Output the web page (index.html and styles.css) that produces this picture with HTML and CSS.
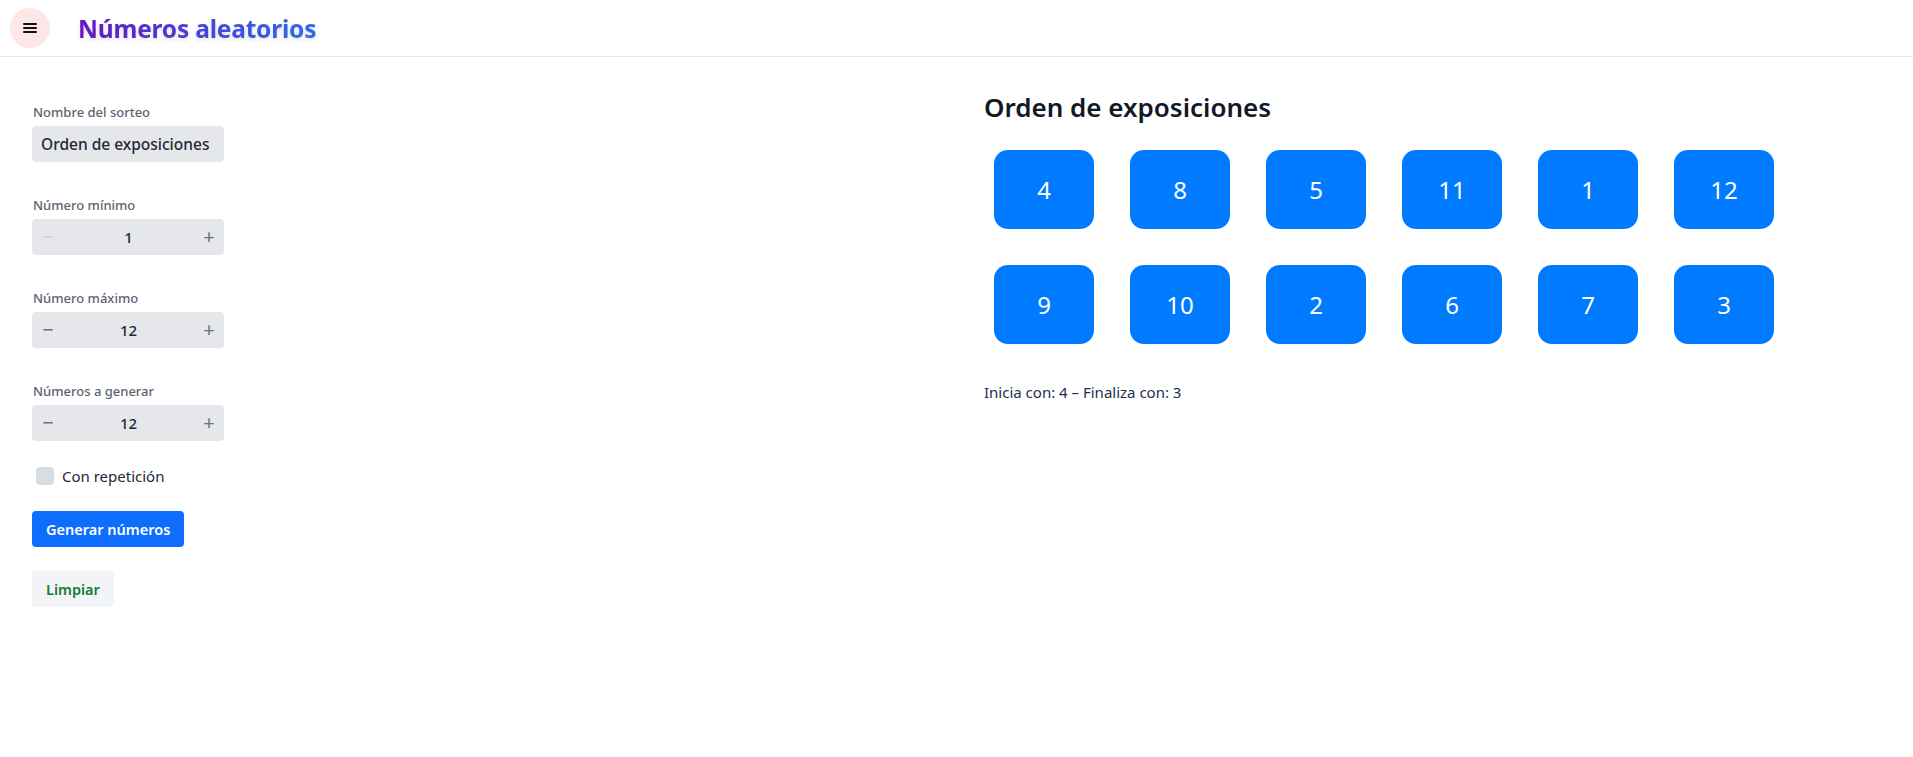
FILE: index.html
```html
<!DOCTYPE html>
<html lang="es">
<head>
<meta charset="utf-8">
<title>Números aleatorios</title>
<link rel="stylesheet" href="styles.css">
</head>
<body>
<header class="topbar">
  <button class="menu-btn" aria-label="Menú">
    <svg width="16" height="16" viewBox="0 0 16 16"><rect x="1" y="3" width="14" height="2" rx="1"/><rect x="1" y="7" width="14" height="2" rx="1"/><rect x="1" y="11" width="14" height="2" rx="1"/></svg>
  </button>
  <h1 class="brand">Números aleatorios</h1>
</header>
<main class="layout">
  <section class="form">
    <div class="field">
      <label class="label">Nombre del sorteo</label>
      <div class="input">Orden de exposiciones</div>
    </div>
    <div class="field">
      <label class="label">Número mínimo</label>
      <div class="stepper">
        <span class="step disabled">−</span><span class="value">1</span><span class="step">+</span>
      </div>
    </div>
    <div class="field">
      <label class="label">Número máximo</label>
      <div class="stepper">
        <span class="step">−</span><span class="value">12</span><span class="step">+</span>
      </div>
    </div>
    <div class="field">
      <label class="label">Números a generar</label>
      <div class="stepper">
        <span class="step">−</span><span class="value">12</span><span class="step">+</span>
      </div>
    </div>
    <label class="check"><span class="box"></span>Con repetición</label>
    <button class="btn-primary">Generar números</button>
    <button class="btn-clear">Limpiar</button>
  </section>
  <section class="results">
    <h2 class="results-title">Orden de exposiciones</h2>
    <div class="grid">
      <div class="num">4</div><div class="num">8</div><div class="num">5</div><div class="num">11</div><div class="num">1</div><div class="num">12</div>
      <div class="num">9</div><div class="num">10</div><div class="num">2</div><div class="num">6</div><div class="num">7</div><div class="num">3</div>
    </div>
    <p class="summary">Inicia con: 4 – Finaliza con: 3</p>
  </section>
</main>
</body>
</html>
```
FILE: styles.css
```css
* { box-sizing: border-box; }
html, body { margin: 0; padding: 0; background: #fff; }
body { font-family: "Noto Sans", "Open Sans", sans-serif; color: #1f2937; }

.topbar {
  height: 57px;
  border-bottom: 1px solid #e5e7eb;
  display: flex;
  align-items: center;
  padding-left: 10px;
  gap: 28px;
}
.menu-btn {
  width: 40px; height: 40px;
  border-radius: 50%;
  border: none;
  background: #fde6e6;
  display: flex; align-items: center; justify-content: center;
  padding: 0;
  margin-top: -1px;
}
.menu-btn svg { fill: #111; }
.brand {
  margin: 0;
  font-size: 24.5px;
  font-weight: 700;
  letter-spacing: -0.2px;
  background: linear-gradient(90deg, #6417c4 0%, #2d6cec 100%);
  -webkit-background-clip: text;
  background-clip: text;
  color: transparent;
  filter: drop-shadow(0 2px 2px rgba(0,0,0,0.12));
}

.layout {
  display: grid;
  grid-template-columns: 952px 1fr;
  padding-left: 32px;
}
.form {
  display: flex;
  flex-direction: column;
  align-items: flex-start;
  padding-top: 46px;
}
.field { display: flex; flex-direction: column; margin-bottom: 34px; }
.label {
  font-size: 13px;
  line-height: 18px;
  font-weight: 500;
  color: #5b6472;
  margin-bottom: 5px;
  padding-left: 1px;
}
.input {
  width: 192px; height: 36px;
  background: #e5e7eb;
  border-radius: 4px;
  font-size: 15.5px;
  font-weight: 500;
  color: #1f2937;
  display: flex; align-items: center;
  padding-left: 9px;
  white-space: nowrap; overflow: hidden;
}
.stepper {
  width: 192px; height: 36px;
  background: #e5e7eb;
  border-radius: 4px;
  display: flex; align-items: center;
  padding: 0 5px 0 6px;
}
.step {
  width: 20px;
  text-align: center;
  font-size: 20px;
  color: #6b7280;
  line-height: 1;
}
.step.disabled { color: #cfd3da; }
.value {
  flex: 1;
  text-align: center;
  font-size: 15px;
  font-weight: 500;
  color: #1f2937;
}
.check {
  display: flex; align-items: center;
  gap: 8px;
  font-size: 15px;
  color: #1f2937;
  margin-top: -10px;
  padding-left: 4px;
  height: 22px;
}
.box {
  width: 18px; height: 18px;
  border-radius: 4px;
  background: #d8dde3;
}
.btn-primary {
  margin-top: 24px;
  height: 36px;
  padding: 0 14px;
  border: none;
  border-radius: 4px;
  background: #0d6efd;
  color: #fff;
  font-family: inherit;
  font-size: 14.5px;
  font-weight: 600;
}
.btn-clear {
  margin-top: 24px;
  height: 36px;
  padding: 0 14px;
  border: none;
  border-radius: 4px;
  background: #f3f4f6;
  color: #157a3a;
  font-family: inherit;
  font-size: 14.5px;
  font-weight: 600;
}

.results { padding-top: 32px; }
.results-title {
  margin: 0;
  font-size: 26px;
  line-height: 36px;
  font-weight: 600;
  color: #111827;
}
.grid {
  display: grid;
  grid-template-columns: repeat(6, 100px);
  column-gap: 36px;
  row-gap: 36px;
  margin-top: 25px;
  padding-left: 10px;
}
.num {
  height: 79px;
  background: #007bff;
  border-radius: 14px;
  color: #fff;
  font-size: 24px;
  display: flex; align-items: center; justify-content: center;
}
.summary {
  margin: 38px 0 0;
  font-size: 15px;
  color: #1e3050;
}
```
